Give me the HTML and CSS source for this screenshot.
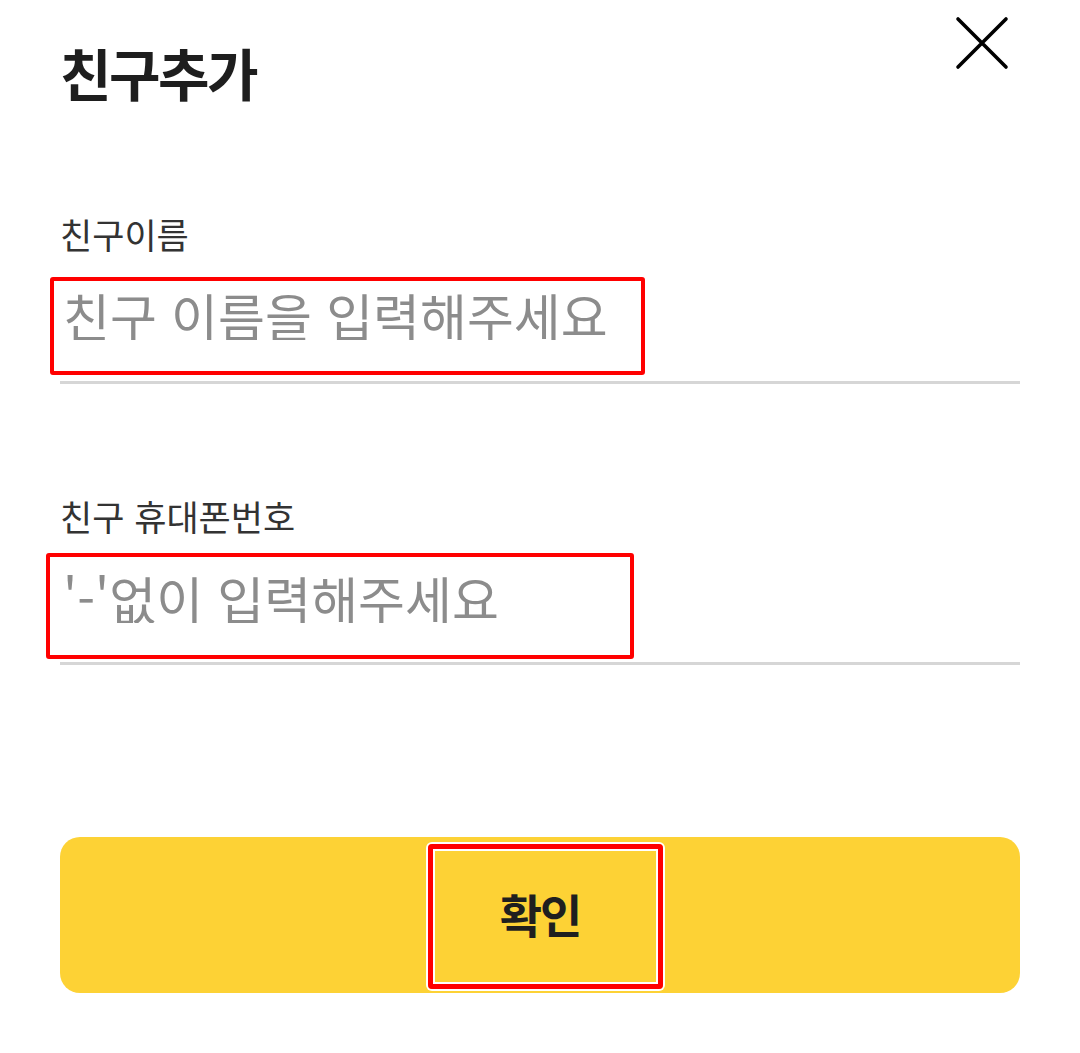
FILE: index.html
```html
<!DOCTYPE html>
<html lang="ko">
<head>
<meta charset="utf-8">
<title>친구추가</title>
<link rel="stylesheet" href="styles.css">
</head>
<body>
<div class="page">
  <header class="header">
    <h1 class="title">친구추가</h1>
    <button class="close" aria-label="닫기">
      <svg width="54" height="54" viewBox="0 0 54 54"><path d="M3 3 L51 51 M51 3 L3 51" stroke="#000" stroke-width="3.6" stroke-linecap="round" fill="none"/></svg>
    </button>
  </header>

  <div class="field field-name">
    <label class="label" for="name">친구이름</label>
    <div class="input-row row-name">
      <input id="name" class="input" type="text" placeholder="친구 이름을 입력해주세요">
      <div class="mark mark-name"></div>
    </div>
  </div>

  <div class="field field-phone">
    <label class="label" for="phone">친구 휴대폰번호</label>
    <div class="input-row row-phone">
      <input id="phone" class="input" type="tel" placeholder="'-'없이 입력해주세요">
      <div class="mark mark-phone"></div>
    </div>
  </div>

  <button class="confirm">
    <span class="confirm-text">확인</span>
    <span class="mark mark-confirm"></span>
  </button>
</div>
</body>
</html>
```

FILE: styles.css
```css
* { box-sizing: border-box; }
html, body { margin: 0; padding: 0; background: #fff; }
body {
  font-family: "Noto Sans CJK KR", "Noto Sans", sans-serif;
  width: 1080px;
  height: 1053px;
  overflow: hidden;
}
.page {
  padding: 0 60px;
}
.header {
  display: flex;
  justify-content: space-between;
  align-items: flex-start;
  padding-top: 16px;
}
.title {
  margin: 28px 0 0 0;
  font-size: 56px;
  line-height: 56px;
  font-weight: 700;
  letter-spacing: -2.5px;
  color: #1e1e1e;
}
.close {
  width: 54px;
  height: 54px;
  padding: 0;
  margin: 0 11px 0 0;
  border: none;
  background: none;
  display: block;
}
.close svg { display: block; }

.field-name { margin-top: 116px; }
.field-phone { margin-top: 114px; }
.label {
  display: block;
  font-size: 35px;
  line-height: 35px;
  color: #333;
  letter-spacing: 0;
}
.input-row {
  position: relative;
  border-bottom: 3px solid #d6d6d6;
}
.row-name { padding: 38px 0 41px 3px; }
.row-phone { padding: 39px 0 39px 3px; }
.input {
  display: block;
  width: 100%;
  height: 51px;
  padding: 0;
  margin: 0;
  border: none;
  outline: none;
  background: transparent;
  font-family: "Noto Sans CJK KR", "Noto Sans", sans-serif;
  font-size: 51px;
  color: #222;
}
.input::placeholder { color: #8c8c8c; opacity: 1; }

.mark {
  position: absolute;
  border: 4px solid #f00;
  border-radius: 3px;
  pointer-events: none;
}
.mark-name { left: -10px; top: 26px; width: 595px; height: 98px; }
.mark-phone { left: -14px; top: 20px; width: 588px; height: 106px; }

.confirm {
  position: relative;
  display: flex;
  align-items: center;
  justify-content: center;
  width: 100%;
  height: 156px;
  margin-top: 172px;
  padding: 0 0 4px 0;
  border: none;
  border-radius: 20px;
  background: #fdd235;
  font-family: "Noto Sans CJK KR", "Noto Sans", sans-serif;
}
.confirm-text {
  font-size: 46px;
  font-weight: 700;
  color: #1f1f1f;
  letter-spacing: -2px;
}
.mark-confirm {
  left: 368px;
  top: 7px;
  width: 235px;
  height: 145px;
  border-width: 5px;
  border-radius: 4px;
  box-shadow: 0 0 0 2px #fff, inset 0 0 0 2px #fff;
}
```
